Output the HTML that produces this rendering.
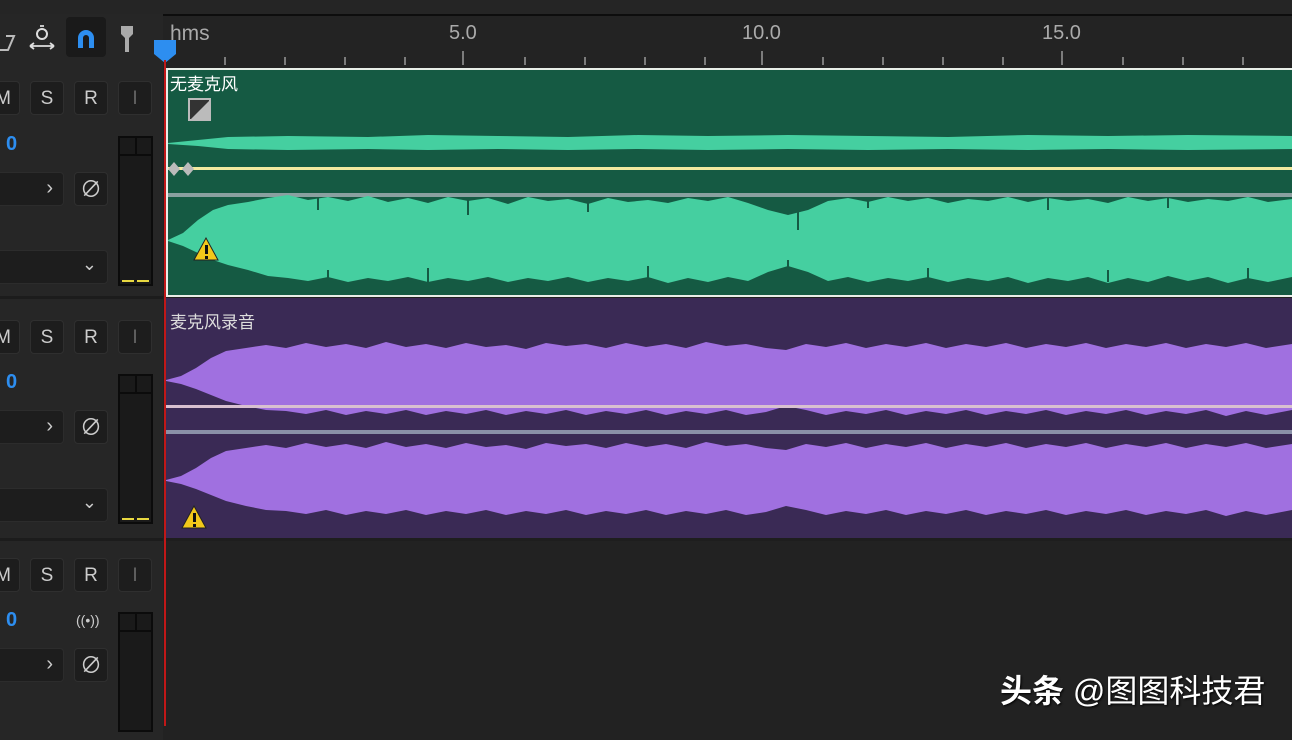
<!DOCTYPE html>
<html><head><meta charset="utf-8"><style>
body{margin:0;width:1292px;height:726px;overflow:hidden;background:#222;font-family:"Liberation Sans","Noto Sans CJK SC",sans-serif;position:relative}
.a{position:absolute}
.btn{position:absolute;width:34px;height:34px;background:#1d1d1d;border:1px solid #2f2f2f;border-radius:4px;color:#ccc;font-size:19px;text-align:center;line-height:34px;box-sizing:border-box}
.z{color:#2d8ef0;font-weight:bold;font-size:20px}
.box{position:absolute;background:#1d1d1d;border:1px solid #2c2c2c;border-radius:4px;box-sizing:border-box;color:#ccc}
.meter{position:absolute;border:2px solid #0b0b0b;background:#1a1a1a;box-sizing:border-box}
</style></head><body>
<div class="a" style="left:0;top:0;width:1292px;height:14px;background:#252525"></div>
<div class="a" style="left:0;top:14px;width:163px;height:726px;background:#262626"></div>
<div class="a" style="left:163px;top:14px;width:1129px;height:54px;background:#232323;border-top:2px solid #0d0d0d;box-sizing:border-box"></div>
<!-- toolbar icons -->
<svg class="a" style="left:0;top:14px" width="163" height="54">
<path d="M-4,36 L8,36 L14,22 L6,22" fill="none" stroke="#bbb" stroke-width="2"/>
<circle cx="42" cy="20" r="5" fill="none" stroke="#ddd" stroke-width="2"/><path d="M30,32 H54 M30,32 l4,-3 M30,32 l4,3 M54,32 l-4,-3 M54,32 l-4,3 M40,12 h4" stroke="#ddd" stroke-width="1.8" fill="none"/>
<rect x="66" y="3" width="40" height="40" rx="4" fill="#1a1a1a"/>
<path d="M78,34 V24 a8,8 0 0 1 16,0 V34 h-5 V24 a3,3 0 0 0 -6,0 V34 z" fill="#2d8ef0"/>
<path d="M121,12 h12 v8 l-4,4 v14 h-4 v-14 l-4,-4z" fill="#aaa"/>
</svg>
<!-- ruler -->
<div class="a" style="left:170px;top:22px;color:#aaa;font-size:21px">hms</div>
<div class="a" style="left:449px;top:22px;color:#aaa;font-size:20px">5.0</div>
<div class="a" style="left:742px;top:22px;color:#aaa;font-size:20px">10.0</div>
<div class="a" style="left:1042px;top:22px;color:#aaa;font-size:20px">15.0</div>
<svg class="a" style="left:163px;top:45px" width="1129" height="23">
<g stroke="#999" stroke-width="1.5">
<path d="M62,12V20 M122,12V20 M182,12V20 M242,12V20 M362,12V20 M422,12V20 M482,12V20 M542,12V20 M660,12V20 M720,12V20 M780,12V20 M840,12V20 M960,12V20 M1020,12V20 M1080,12V20 M300,6V20 M599,6V20 M899,6V20"/></g>
</svg>
<svg class="a" style="left:153px;top:40px" width="24" height="24"><path d="M1,0 H23 V14 L12,23 L1,14z" fill="#2d8ef0"/></svg>
<!-- track 1 clip -->
<div class="a" style="left:166px;top:68px;width:1130px;height:229px;background:#155a43;border:2px solid #e8eee8;box-sizing:border-box"></div>
<div class="a" style="left:170px;top:70px;color:#fff;font-size:17px">无麦克风</div>
<svg class="a" style="left:188px;top:98px" width="24" height="24"><rect x="1" y="1" width="21" height="21" fill="#333" stroke="#bbb" stroke-width="2"/><path d="M2,22 L22,2 V22z" fill="#bbb"/></svg>
<svg class="a" style="left:168px;top:70px" width="1124" height="226">
<path d="M0,73 L30,70 L60,67 L120,66 L200,67 L260,65 L330,66 L400,67 L470,65 L540,66 L620,65 L700,66 L780,67 L860,65 L940,66 L1020,65 L1124,66 V79 L1020,80 L940,79 L860,80 L780,79 L700,80 L620,79 L540,80 L470,79 L400,80 L330,79 L260,80 L200,79 L120,80 L60,79 L30,76 L0,74z" fill="#45cfa0"/>
<rect x="0" y="97" width="1124" height="3" fill="#f2eaa0"/>
<path d="M0,99 l6,-7 6,7 -6,7z M14,99 l6,-7 6,7 -6,7z" fill="#bbb"/>
<rect x="0" y="123" width="1124" height="4" fill="#8aa0a0"/>
<path d="M0,170 L15,163 L30,150 L45,140 L60,135 L80,132 L100,128 L120,125 L140,130 L160,127 L180,131 L200,126 L220,132 L240,128 L260,133 L280,127 L300,131 L320,128 L340,134 L360,127 L380,131 L400,129 L420,134 L440,128 L460,132 L480,130 L500,133 L520,128 L540,131 L560,127 L580,133 L600,140 L620,145 L640,140 L660,131 L680,128 L700,132 L720,127 L740,131 L760,128 L780,133 L800,129 L820,131 L840,127 L860,132 L880,128 L900,131 L920,129 L940,133 L960,127 L980,131 L1000,128 L1020,132 L1040,129 L1060,131 L1080,127 L1100,132 L1124,129 V207 L1100,212 L1080,208 L1060,213 L1040,207 L1020,211 L1000,206 L980,212 L960,208 L940,213 L920,207 L900,211 L880,208 L860,213 L840,207 L820,211 L800,208 L780,212 L760,207 L740,211 L720,208 L700,212 L680,207 L660,211 L640,202 L620,196 L600,202 L580,211 L560,207 L540,212 L520,208 L500,213 L480,207 L460,211 L440,208 L420,212 L400,207 L380,211 L360,208 L340,212 L320,207 L300,211 L280,208 L260,212 L240,207 L220,211 L200,208 L180,212 L160,207 L140,211 L120,208 L100,206 L80,200 L60,195 L45,190 L30,183 L15,176 L0,171z" fill="#45cfa0"/>
<g stroke="#155a43" stroke-width="2"><path d="M150,128V140 M300,128V145 M420,130V142 M630,128V160 M700,128V138 M880,128V140 M1000,128V138 M160,212V200 M260,212V198 M480,212V196 M620,212V190 M760,212V198 M940,212V200 M1080,212V198"/></g>
<path d="M26,190 l12,-22 12,22z" fill="#f2c81a" stroke="#222" stroke-width="1"/><rect x="37" y="175" width="3" height="9" fill="#111"/><rect x="37" y="186" width="3" height="3" fill="#111"/>
</svg>
<!-- track 2 clip -->
<div class="a" style="left:166px;top:298px;width:1130px;height:240px;background:#3a2a55"></div>
<div class="a" style="left:170px;top:308px;color:#ddd;font-size:17px">麦克风录音</div>
<svg class="a" style="left:166px;top:298px" width="1126" height="240">
<path d="M0,82 L15,78 L30,70 L45,60 L60,53 L80,50 L100,47 L120,50 L140,45 L160,49 L180,46 L200,50 L220,44 L240,49 L260,46 L280,50 L300,45 L320,49 L340,47 L360,51 L380,45 L400,48 L420,46 L440,50 L460,45 L480,49 L500,46 L520,50 L540,44 L560,48 L580,46 L600,50 L620,52 L640,46 L660,49 L680,45 L700,50 L720,46 L740,49 L760,45 L780,50 L800,46 L820,49 L840,45 L860,50 L880,46 L900,49 L920,45 L940,50 L960,46 L980,49 L1000,45 L1020,50 L1040,46 L1060,49 L1080,45 L1100,50 L1126,46 V112 L1100,117 L1080,113 L1060,118 L1040,112 L1020,116 L1000,113 L980,117 L960,112 L940,116 L920,113 L900,117 L880,112 L860,116 L840,113 L820,117 L800,112 L780,116 L760,113 L740,117 L720,112 L700,116 L680,113 L660,117 L640,112 L620,108 L600,114 L580,117 L560,112 L540,116 L520,113 L500,117 L480,112 L460,116 L440,113 L420,117 L400,112 L380,116 L360,113 L340,117 L320,112 L300,116 L280,113 L260,117 L240,112 L220,116 L200,113 L180,117 L160,112 L140,116 L120,113 L100,112 L80,108 L60,103 L45,97 L30,91 L15,86 L0,83z" fill="#a070e0"/>
<rect x="0" y="107" width="1126" height="3" fill="#d8c0d0"/>
<rect x="0" y="132" width="1126" height="4" fill="#8a90a8"/>
<path d="M0,182 L15,178 L30,170 L45,160 L60,153 L80,150 L100,147 L120,150 L140,145 L160,149 L180,146 L200,150 L220,144 L240,149 L260,146 L280,150 L300,145 L320,149 L340,147 L360,151 L380,145 L400,148 L420,146 L440,150 L460,145 L480,149 L500,146 L520,150 L540,144 L560,148 L580,146 L600,150 L620,152 L640,146 L660,149 L680,145 L700,150 L720,146 L740,149 L760,145 L780,150 L800,146 L820,149 L840,145 L860,150 L880,146 L900,149 L920,145 L940,150 L960,146 L980,149 L1000,145 L1020,150 L1040,146 L1060,149 L1080,145 L1100,150 L1126,146 V212 L1100,217 L1080,213 L1060,218 L1040,212 L1020,216 L1000,213 L980,217 L960,212 L940,216 L920,213 L900,217 L880,212 L860,216 L840,213 L820,217 L800,212 L780,216 L760,213 L740,217 L720,212 L700,216 L680,213 L660,217 L640,212 L620,208 L600,214 L580,217 L560,212 L540,216 L520,213 L500,217 L480,212 L460,216 L440,213 L420,217 L400,212 L380,216 L360,213 L340,217 L320,212 L300,216 L280,213 L260,217 L240,212 L220,216 L200,213 L180,217 L160,212 L140,216 L120,213 L100,212 L80,208 L60,203 L45,197 L30,191 L15,186 L0,183z" fill="#a070e0"/>
<path d="M16,230 l12,-22 12,22z" fill="#f2c81a" stroke="#222" stroke-width="1"/><rect x="27" y="215" width="3" height="9" fill="#111"/><rect x="27" y="226" width="3" height="3" fill="#111"/>
</svg>
<!-- red playhead line -->
<div class="a" style="left:164px;top:60px;width:2px;height:666px;background:#c01818"></div>
<!-- left panel separators -->
<div class="a" style="left:0;top:296px;width:163px;height:3px;background:#1c1c1c"></div>
<div class="a" style="left:0;top:538px;width:163px;height:3px;background:#1c1c1c"></div>
<div class="a" style="left:166px;top:538px;width:1126px;height:3px;background:#1e1e1e"></div>
<!-- track controls -->
<div class="btn" style="left:-14px;top:81px">M</div><div class="btn" style="left:30px;top:81px">S</div><div class="btn" style="left:74px;top:81px">R</div><div class="btn" style="left:118px;top:81px;color:#666">I</div>
<div class="a z" style="left:6px;top:133px">0</div>
<div class="box" style="left:-4px;top:172px;width:68px;height:34px"><span style="position:absolute;right:10px;top:4px;font-size:20px">›</span></div>
<div class="btn" style="left:74px;top:172px;font-size:22px">∅</div>
<div class="box" style="left:-4px;top:250px;width:112px;height:34px"><span style="position:absolute;right:10px;top:3px;font-size:18px">⌄</span></div>
<div class="meter" style="left:118px;top:136px;width:35px;height:150px"><div style="position:absolute;left:0;top:16px;width:31px;height:2px;background:#0b0b0b"></div><div style="position:absolute;left:15px;top:0;width:2px;height:17px;background:#0b0b0b"></div><div style="position:absolute;left:2px;bottom:2px;width:27px;height:2px;border-left:12px solid #e8d840;border-right:12px solid #e8d840;box-sizing:border-box"></div></div>

<div class="btn" style="left:-14px;top:320px">M</div><div class="btn" style="left:30px;top:320px">S</div><div class="btn" style="left:74px;top:320px">R</div><div class="btn" style="left:118px;top:320px;color:#666">I</div>
<div class="a z" style="left:6px;top:371px">0</div>
<div class="box" style="left:-4px;top:410px;width:68px;height:34px"><span style="position:absolute;right:10px;top:4px;font-size:20px">›</span></div>
<div class="btn" style="left:74px;top:410px;font-size:22px">∅</div>
<div class="box" style="left:-4px;top:488px;width:112px;height:34px"><span style="position:absolute;right:10px;top:3px;font-size:18px">⌄</span></div>
<div class="meter" style="left:118px;top:374px;width:35px;height:150px"><div style="position:absolute;left:0;top:16px;width:31px;height:2px;background:#0b0b0b"></div><div style="position:absolute;left:15px;top:0;width:2px;height:17px;background:#0b0b0b"></div><div style="position:absolute;left:2px;bottom:2px;width:27px;height:2px;border-left:12px solid #e8d840;border-right:12px solid #e8d840;box-sizing:border-box"></div></div>

<div class="btn" style="left:-14px;top:558px">M</div><div class="btn" style="left:30px;top:558px">S</div><div class="btn" style="left:74px;top:558px">R</div><div class="btn" style="left:118px;top:558px;color:#666">I</div>
<div class="a z" style="left:6px;top:609px">0</div>
<div class="a" style="left:76px;top:612px;color:#ccc;font-size:14px">((•))</div>
<div class="box" style="left:-4px;top:648px;width:68px;height:34px"><span style="position:absolute;right:10px;top:4px;font-size:20px">›</span></div>
<div class="btn" style="left:74px;top:648px;font-size:22px">∅</div>
<div class="meter" style="left:118px;top:612px;width:35px;height:120px"><div style="position:absolute;left:0;top:16px;width:31px;height:2px;background:#0b0b0b"></div><div style="position:absolute;left:15px;top:0;width:2px;height:17px;background:#0b0b0b"></div></div>

<!-- watermark -->
<div class="a" style="left:1000px;top:666px;color:#fff;font-size:32px;text-shadow:1px 1px 2px #000;white-space:nowrap"><b>头条</b> @图图科技君</div>
</body></html>
